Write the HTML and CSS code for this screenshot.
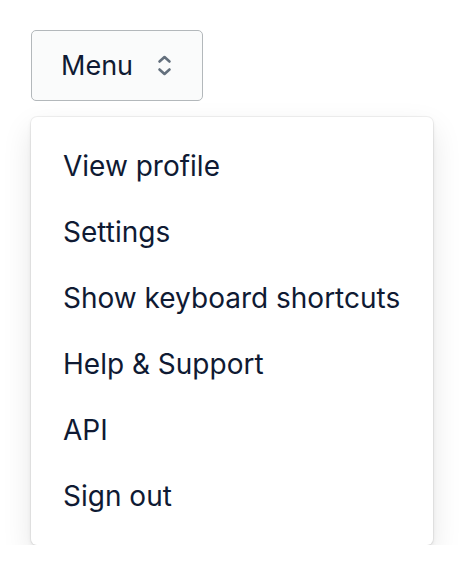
FILE: index.html
```html
<!DOCTYPE html>
<html>
<head>
<meta charset="utf-8">
<link rel="stylesheet" href="styles.css">
</head>
<body>
<div class="wrap">
  <button class="trigger">
    <span>Menu</span>
    <svg class="chev" width="15" height="24" viewBox="0 0 15 24" fill="none" stroke="#64707d" stroke-width="2.6" stroke-linecap="round" stroke-linejoin="round">
      <path d="M2.5 7.5 L7.5 3 L12.5 7.5"/>
      <path d="M2.5 15.5 L7.5 20 L12.5 15.5"/>
    </svg>
  </button>
  <ul class="menu">
    <li class="item">View profile</li>
    <li class="item">Settings</li>
    <li class="item">Show keyboard shortcuts</li>
    <li class="item">Help &amp; Support</li>
    <li class="item">API</li>
    <li class="item">Sign out</li>
  </ul>
</div>
</body>
</html>
```
FILE: styles.css
```css
html, body {
  margin: 0;
  padding: 0;
  background: #ffffff;
}
body {
  font-family: Inter, "Noto Sans", sans-serif;
  color: #0f1a33;
}
.wrap {
  padding: 30px 0 0 31px;
  display: flex;
  flex-direction: column;
  align-items: flex-start;
  gap: 16px;
}
.trigger {
  box-sizing: border-box;
  width: 172px;
  height: 71px;
  display: flex;
  align-items: center;
  gap: 24px;
  padding: 0 0 0 29px;
  border: 1.5px solid #b3b8bb;
  border-radius: 5px;
  background: #fafbfb;
  font-family: inherit;
  font-size: 27px;
  color: #0f1a33;
}
.chev { display: block; }
.menu {
  box-sizing: border-box;
  list-style: none;
  margin: 0;
  width: 402px;
  padding: 16px 0;
  background: #fff;
  border-radius: 6px;
  box-shadow: 0 0 0 1px rgba(0,0,0,0.05), 0 12px 30px rgba(0,0,0,0.1), 0 2px 4px rgba(0,0,0,0.08);
}
.item {
  height: 66px;
  display: flex;
  align-items: center;
  padding-left: 32px;
  font-size: 28px;
}
```
